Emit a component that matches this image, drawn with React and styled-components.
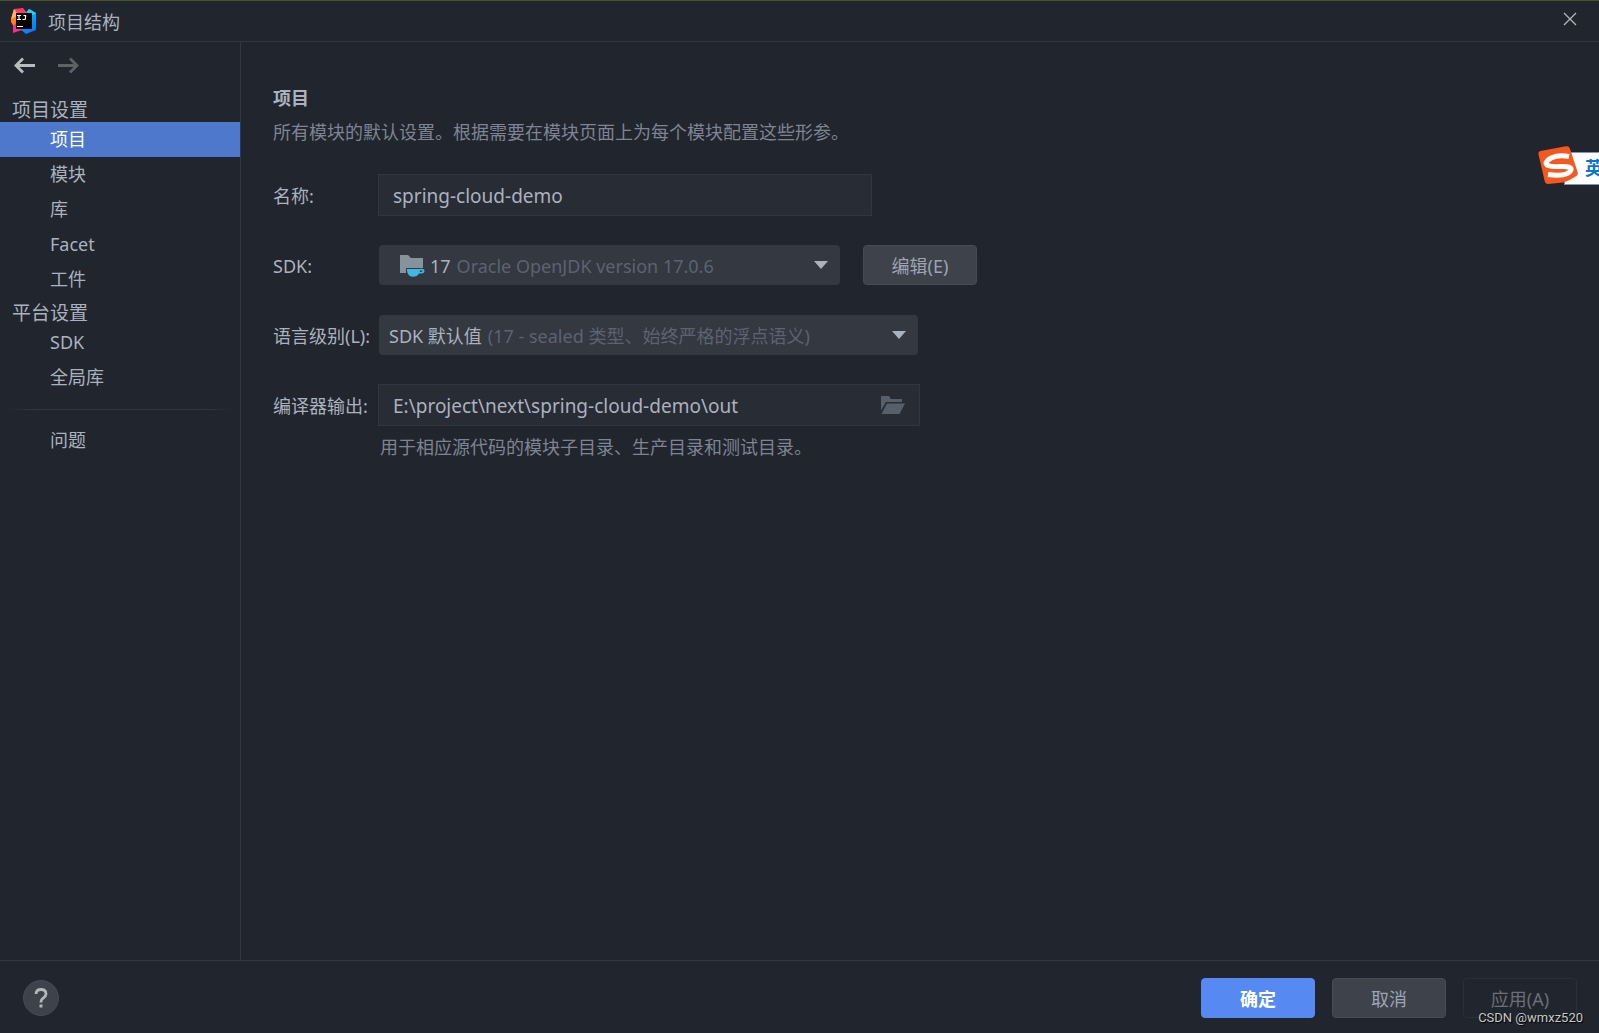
import React, { useState } from "react";
import styled, { createGlobalStyle } from "styled-components";

const color = {
  bg: "#21252d",
  line: "#32363f",
  field: "#282c34",
  combo: "#333841",
  button: "#3d424b",
  buttonLine: "#464c55",
  text: "#abb2bf",
  dim: "#7e8491",
  faint: "#5c6370",
};

const GlobalStyle = createGlobalStyle`
  *, *::before, *::after { box-sizing: border-box; }
  body {
    margin: 0;
    background: ${color.bg};
    color: ${color.text};
    font: 18px/24px "Noto Sans", "Noto Sans CJK SC", sans-serif;
  }
  button, input, select { font: inherit; color: inherit; margin: 0; }
`;

const Dialog = styled.div`
  position: relative;
  min-height: 100vh;
  display: flex;
  flex-direction: column;
  overflow: hidden;
  border-top: 1px solid #4b5320;
`;

const TitleBar = styled.header`
  display: flex;
  align-items: center;
  height: 41px;
  padding: 0 20px 0 11px;
  border-bottom: 1px solid ${color.line};
`;

const Title = styled.h1`
  flex: 1;
  margin: 0 0 0 12px;
  padding-top: 2px;
  font-size: 18px;
  font-weight: 400;
`;

const IconButton = styled.button`
  display: flex;
  align-items: center;
  justify-content: center;
  padding: 0;
  border: 0;
  background: none;
`;

const Body = styled.div`
  flex: 1;
  display: flex;
`;

const Sidebar = styled.nav`
  flex: 0 0 241px;
  border-right: 1px solid ${color.line};
`;

const History = styled.div`
  display: flex;
  gap: 21px;
  padding: 12px 13px 17px;
`;

const GroupTitle = styled.h2`
  height: 28px;
  margin: 0;
  padding: 2px 0 0 12px;
  font-size: 19px;
  line-height: 28px;
  font-weight: 400;
`;

const NavLink = styled.a`
  display: block;
  height: 35px;
  padding-left: 50px;
  line-height: 35px;
  text-decoration: none;
  color: ${(p) => (p.$active ? "#ffffff" : color.text)};
  background: ${(p) => (p.$active ? "#4d78cc" : "transparent")};
`;

const Divider = styled.hr`
  height: 1px;
  margin: 14px 8px 13px;
  border: 0;
  background: linear-gradient(90deg, transparent, ${color.line} 12%, ${color.line} 88%, transparent);
`;

const Main = styled.main`
  flex: 1;
  min-width: 0;
  padding: 44px 32px;
`;

const Heading = styled.h2`
  margin: 0;
  font-size: 18px;
  font-weight: 700;
`;

const Note = styled.p`
  margin: 0;
  color: ${color.dim};
`;

const Form = styled.form`
  display: grid;
  grid-template-columns: 105px 1fr;
  align-items: center;
  row-gap: 28px;
  margin-top: 30px;
`;

const Label = styled.label`
  padding-top: 2px;
`;

const Intro = styled.div`
  display: grid;
  row-gap: 10px;
`;

const Control = styled.div`
  display: flex;
  align-items: center;
  gap: 22px;
  height: 42px;
`;

const Field = styled.div`
  display: flex;
  align-items: center;
  width: ${(p) => p.$width}px;
  height: 42px;
  padding: 0 14px;
  border: 1px solid ${color.line};
  background: ${color.field};
`;

const TextInput = styled.input`
  flex: 1;
  min-width: 0;
  padding: 2px 0 0;
  border: 0;
  outline: 0;
  background: none;
  font-size: 19px;
`;

const Combo = styled.div`
  display: flex;
  align-items: center;
  width: ${(p) => p.$width}px;
  height: 40px;
  margin: 1px;
  padding: 0 12px 0 ${(p) => p.$inset}px;
  border-radius: 4px;
  background: ${color.combo};
`;

const Select = styled.select`
  field-sizing: content;
  appearance: none;
  padding: 2px 0 0;
  border: 0;
  outline: 0;
  background: none;
`;

const Detail = styled.span`
  flex: 1;
  padding: 2px 0 0 6px;
  white-space: nowrap;
  color: ${color.faint};
`;

const Button = styled.button`
  width: 114px;
  height: 40px;
  padding: 2px 0 0;
  border: 1px solid ${(p) => (p.$primary ? "#568af2" : color.buttonLine)};
  border-radius: 4px;
  background: ${(p) => (p.$primary ? "#568af2" : color.button)};
  color: ${(p) => (p.$primary ? "#ffffff" : "#9da5b4")};
  font-weight: ${(p) => (p.$primary ? 700 : 400)};

  &:disabled {
    border-color: #2b2f36;
    background: none;
    color: #6b6f77;
  }
`;

const Hint = styled(Note)`
  padding: 9px 0 0 107px;
`;

const Footer = styled.footer`
  display: flex;
  align-items: center;
  justify-content: space-between;
  height: 73px;
  padding: 2px 22px 0 23px;
  border-top: 1px solid ${color.line};
`;

const Actions = styled.div`
  display: flex;
  gap: 17px;
`;

const HelpButton = styled.button`
  display: flex;
  align-items: center;
  justify-content: center;
  width: 36px;
  height: 36px;
  padding: 0;
  border: 1px solid ${color.buttonLine};
  border-radius: 50%;
  background: ${color.button};
`;

const Ime = styled.aside`
  position: absolute;
  top: 144px;
  right: 0;
  display: flex;
  width: 61px;
  height: 40px;
  overflow: hidden;
`;

const ImeBar = styled.div`
  flex: none;
  width: 70px;
  height: 33px;
  margin: 7px 0 0 26px;
  padding-left: 20px;
  border: 1px solid #8296aa;
  background: #ffffff;
  color: #0a74d0;
  font-size: 18px;
  line-height: 31px;
  font-weight: 700;
`;

const ImeLogo = styled.svg`
  position: absolute;
  left: 0;
  top: 0;
`;

const Credit = styled.span`
  position: absolute;
  right: 16px;
  bottom: 6px;
  font: 13px/18px Roboto, sans-serif;
  color: #c6c8ca;
  text-shadow: 1px 1px 1px #000000;
`;

function AppLogo() {
  return (
    <svg width="25" height="26" viewBox="0 0 25 26" aria-hidden="true">
      <defs>
        <linearGradient id="cool" x1="0" y1="0" x2="0.4" y2="1">
          <stop offset="0" stopColor="#0bc4fb" />
          <stop offset="1" stopColor="#087cfa" />
        </linearGradient>
      </defs>
      <path d="M15 4 18 1l7 4v17l-10 4-6-5Z" fill="url(#cool)" />
      <path d="M18 1 15 7h7l3-2Z" fill="#23d0f5" />
      <path d="M3 1 12 0l4 5-8 8-8-2Z" fill="#fe3a63" />
      <path d="M3 1 6 5 4 11H0Z" fill="#fdb660" />
      <path d="M0 11 4 9l3 6-4 4-3-5Z" fill="#fc801d" />
      <path d="M2 18 5 15l6 7-9 3Z" fill="#f72f8c" />
      <rect x="5" y="5" width="16" height="16" fill="#080406" />
      <path
        d="M6 7.500h4M8 7.500v4M6 11.500h4M12.500 7.500H14.500v3q0 1-1 1h-2M6 18.500h6"
        fill="none"
        stroke="#fff"
        strokeWidth="1.200"
      />
    </svg>
  );
}

function Arrow({ flip, stroke }) {
  return (
    <svg width="23" height="23" viewBox="0 0 23 23" aria-hidden="true">
      <path
        d="M22 11.5H3M10 4.5l-7 7 7 7"
        fill="none"
        stroke={stroke}
        strokeWidth="2.8"
        transform={flip ? "matrix(-1 0 0 1 23 0)" : undefined}
      />
    </svg>
  );
}

function Caret() {
  return (
    <svg width="14" height="8" viewBox="0 0 14 8" aria-hidden="true">
      <path d="M0 0h14L7 8Z" fill={color.text} />
    </svg>
  );
}

function SdkIcon() {
  return (
    <svg width="25" height="24" viewBox="0 0 25 24" aria-hidden="true">
      <path d="M0 2h8l3 3h12v10H6v5H0Z" fill="#87939a" />
      <path d="M7 16h12.500q5-.8 5 2 0 2.800-5.500 2.600-2 3.200-5.500 3.200-6 0-6.500-6Z" fill="#40b6e0" />
      <path d="M20 17.600h1.600q1 0 1 .7 0 .8-2.800.8Z" fill={color.combo} />
    </svg>
  );
}

function FolderIcon() {
  return (
    <svg width="24" height="18" viewBox="0 0 24 18" aria-hidden="true">
      <path d="M0 0h8l2 3h11v3H5L0 14.500Z" fill="#57606a" />
      <path d="M6 7.500h18L18.500 18H0.500Z" fill="#57606a" />
    </svg>
  );
}

const projectItems = ["项目", "模块", "库", "Facet", "工件"];
const platformItems = ["SDK", "全局库"];

export default function App() {
  const [active, setActive] = useState("项目");
  const [name, setName] = useState("spring-cloud-demo");
  const [output, setOutput] = useState("E:\\project\\next\\spring-cloud-demo\\out");

  const link = (item) => (
    <NavLink key={item} href="#" $active={item === active} onClick={() => setActive(item)}>
      {item}
    </NavLink>
  );

  return (
    <>
      <GlobalStyle />
      <Dialog>
        <TitleBar>
          <AppLogo />
          <Title>项目结构</Title>
          <IconButton type="button" aria-label="关闭">
            <svg width="18" height="18" viewBox="0 0 18 18" aria-hidden="true">
              <path d="M3 1l12 12M15 1L3 13" stroke="#b4b6b9" strokeWidth="1.3" />
            </svg>
          </IconButton>
        </TitleBar>
        <Body>
          <Sidebar>
            <History>
              <IconButton type="button" aria-label="后退">
                <Arrow stroke="#b9bbbd" />
              </IconButton>
              <IconButton type="button" aria-label="前进" disabled>
                <Arrow flip stroke="#5f6164" />
              </IconButton>
            </History>
            <GroupTitle>项目设置</GroupTitle>
            {projectItems.map(link)}
            <GroupTitle>平台设置</GroupTitle>
            {platformItems.map(link)}
            <Divider />
            {link("问题")}
          </Sidebar>
          <Main>
            <Intro>
              <Heading>项目</Heading>
              <Note>所有模块的默认设置。根据需要在模块页面上为每个模块配置这些形参。</Note>
            </Intro>
            <Form>
              <Label htmlFor="name">名称:</Label>
              <Control>
                <Field $width={494}>
                  <TextInput id="name" value={name} onChange={(e) => setName(e.target.value)} />
                </Field>
              </Control>
              <Label htmlFor="sdk">SDK:</Label>
              <Control>
                <Combo $width={461} $inset={21}>
                  <SdkIcon />
                  <ComboValue id="sdk" $gap={5} value="17" />
                  <Detail>Oracle OpenJDK version 17.0.6</Detail>
                  <Caret />
                </Combo>
                <Button type="button">编辑(E)</Button>
              </Control>
              <Label htmlFor="level">语言级别(L):</Label>
              <Control>
                <Combo $width={539} $inset={10}>
                  <ComboValue id="level" value="SDK 默认值" />
                  <Detail>(17 - sealed 类型、始终严格的浮点语义)</Detail>
                  <Caret />
                </Combo>
              </Control>
              <Label htmlFor="output">编译器输出:</Label>
              <Control>
                <Field $width={542}>
                  <TextInput id="output" value={output} onChange={(e) => setOutput(e.target.value)} />
                  <IconButton type="button" aria-label="浏览">
                    <FolderIcon />
                  </IconButton>
                </Field>
              </Control>
            </Form>
            <Hint>用于相应源代码的模块子目录、生产目录和测试目录。</Hint>
          </Main>
        </Body>
        <Footer>
          <HelpButton type="button" aria-label="帮助">
            <svg width="14" height="20" viewBox="0 0 14 20" aria-hidden="true">
              <path d="M2 6q0-4.500 5-4.500T12 6q0 2-2.500 3.800T7 13.500v1" fill="none" stroke="#b4b6b9" strokeWidth="2.800" />
              <rect x="5.500" y="16.500" width="3" height="3" fill="#b4b6b9" />
            </svg>
          </HelpButton>
          <Actions>
            <Button type="submit" $primary>确定</Button>
            <Button type="button">取消</Button>
            <Button type="button" disabled>应用(A)</Button>
          </Actions>
        </Footer>
        <Ime>
          <ImeBar>英</ImeBar>
          <ImeLogo width="41" height="40" viewBox="0 0 41 40" aria-hidden="true">
            <path
              d="M2.500 6 28 1.300q3-.5 3.800 2L39.600 27q.8 3-2 4.500-6 4-12 6L10 39q-2.500 0-3.200-2.500L.5 9.500q-.5-3 2-3.500Z"
              fill="#f4581f"
            />
            <path
              d="M31 11.500Q21 9.500 13 13 5 17.500 10 20.500 14 22 23 21.500 34 21 33 25 30 32 10 29.500"
              fill="none"
              stroke="#fff"
              strokeWidth="5"
            />
          </ImeLogo>
        </Ime>
        <Credit>CSDN @wmxz520</Credit>
      </Dialog>
    </>
  );
}

const ValueSlot = styled.span`
  display: flex;
  padding-left: ${(p) => p.$gap || 0}px;
`;

function ComboValue({ id, value, $gap }) {
  return (
    <ValueSlot $gap={$gap}>
      <Select id={id}>
        <option>{value}</option>
      </Select>
    </ValueSlot>
  );
}
